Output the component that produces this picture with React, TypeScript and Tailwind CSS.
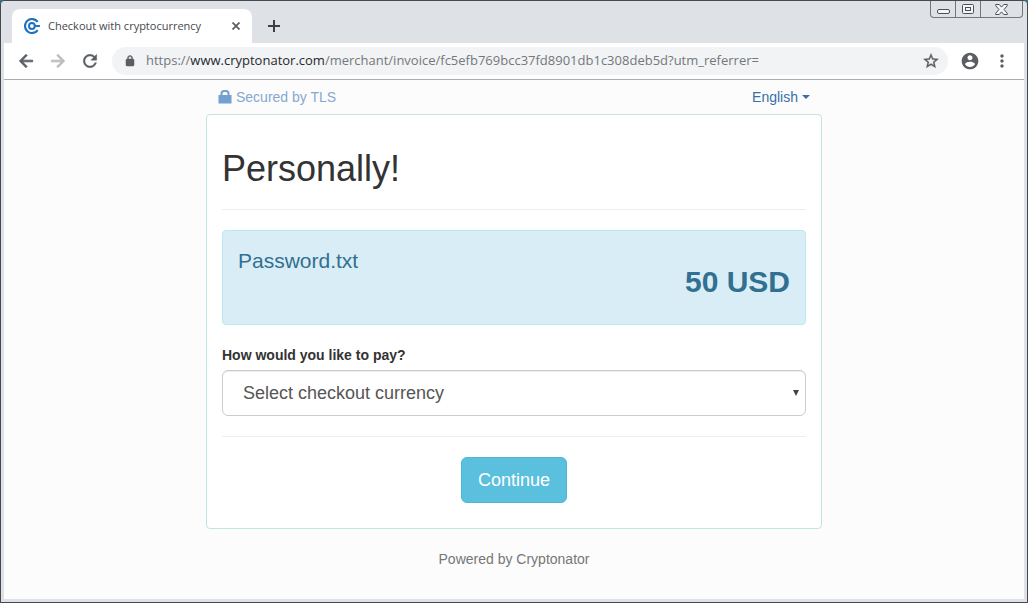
import { useState } from "react";

function CryptonatorLogo() {
  return (
    <svg viewBox="0 0 16 16" className="size-4 shrink-0" fill="none" stroke="#1f73bd" aria-hidden="true">
      <path d="M13.700 3.900A7 7 0 1 0 13.700 12.100" strokeWidth="2.200" />
      <circle cx="7.900" cy="8" r="2.900" strokeWidth="2" />
      <path d="M10.500 8H16" strokeWidth="1.900" />
    </svg>
  );
}

function MaterialIcon({ d, className }: { d: string; className: string }) {
  return (
    <svg viewBox="0 0 24 24" className={className} fill="currentColor" aria-hidden="true">
      <path d={d} />
    </svg>
  );
}

const paths = {
  back: "M20 11H7.83l5.59-5.59L12 4l-8 8 8 8 1.41-1.41L7.83 13H20v-2z",
  forward: "M12 4l-1.41 1.41L16.17 11H4v2h12.17l-5.58 5.59L12 20l8-8z",
  reload:
    "M17.65 6.35C16.2 4.9 14.21 4 12 4c-4.42 0-7.99 3.58-7.99 8s3.57 8 7.99 8c3.73 0 6.84-2.55 7.73-6h-2.08c-.82 2.33-3.04 4-5.65 4-3.31 0-6-2.69-6-6s2.69-6 6-6c1.66 0 3.14.69 4.22 1.78L13 11h7V4l-2.35 2.35z",
  lock: "M18 8h-1V6c0-2.76-2.24-5-5-5S7 3.24 7 6v2H6c-1.1 0-2 .9-2 2v10c0 1.1.9 2 2 2h12c1.1 0 2-.9 2-2V10c0-1.1-.9-2-2-2zM9 6c0-1.66 1.34-3 3-3s3 1.34 3 3v2H9z",
  star: "M22 9.24l-7.19-.62L12 2 9.19 8.63 2 9.24l5.46 4.73L5.82 21 12 17.27 18.18 21l-1.63-7.03L22 9.24zM12 15.4l-3.76 2.27 1-4.28-3.32-2.88 4.38-.38L12 6.1l1.71 4.04 4.38.38-3.32 2.88 1 4.28L12 15.4z",
  account:
    "M12 2C6.48 2 2 6.48 2 12s4.48 10 10 10 10-4.48 10-10S17.52 2 12 2zm0 3c1.66 0 3 1.34 3 3s-1.34 3-3 3-3-1.34-3-3 1.34-3 3-3zm0 14.2c-2.5 0-4.71-1.28-6-3.22.03-1.99 4-3.08 6-3.08 1.99 0 5.97 1.09 6 3.08-1.29 1.94-3.5 3.22-6 3.22z",
  menu: "M12 8c1.1 0 2-.9 2-2s-.9-2-2-2-2 .9-2 2 .9 2 2 2zm0 2c-1.1 0-2 .9-2 2s.9 2 2 2 2-.9 2-2-.9-2-2-2zm0 6c-1.1 0-2 .9-2 2s.9 2 2 2 2-.9 2-2-.9-2-2-2z",
};

function WindowControls() {
  return (
    <div className="flex h-[17px] overflow-hidden rounded-b-[4px] border border-t-0 border-[#73777c] text-[#4d5156]">
      <button aria-label="Minimize" className="flex w-[25px] items-center justify-center border-r border-[#73777c]">
        <svg viewBox="0 0 13 12" className="h-3 w-[13px]" fill="#f4f5f6" stroke="currentColor">
          <rect x="0.5" y="6.5" width="12" height="4" rx="1.5" />
        </svg>
      </button>
      <button aria-label="Maximize" className="flex w-[25px] items-center justify-center border-r border-[#73777c]">
        <svg viewBox="0 0 12 10" className="h-[10px] w-3" fill="#f4f5f6" stroke="currentColor">
          <rect x="0.5" y="0.5" width="11" height="9" rx="1" />
          <rect x="3.5" y="3.5" width="5" height="3" />
        </svg>
      </button>
      <button aria-label="Close window" className="flex w-[41px] items-center justify-center">
        <svg viewBox="0 0 13 11" className="h-[11px] w-[13px]" fill="#f4f5f6" stroke="currentColor" strokeLinejoin="round">
          <path d="M.7.5h3.5l2.3 2.6L8.8.5h3.5v1.2L9 5.5l3.3 3.8v1.2H8.8L6.5 7.9l-2.3 2.6H.7V9.3L4 5.5.7 1.7z" />
        </svg>
      </button>
    </div>
  );
}

function TabStrip() {
  return (
    <div className="flex h-[42px] items-end bg-[#dee1e6] pl-2">
      <div className="flex h-[34px] w-60 items-center rounded-t-lg bg-white pr-2 pl-3">
        <CryptonatorLogo />
        <span className="ml-2 flex-1 truncate text-[11px] text-[#45494d]">Checkout with cryptocurrency</span>
        <button aria-label="Close tab" className="flex size-4 items-center justify-center text-[#5a5e63]">
          <svg viewBox="0 0 8 8" className="size-2" stroke="currentColor" strokeWidth="1.7">
            <path d="M.5.5l7 7M7.500.5l-7 7" />
          </svg>
        </button>
      </div>
      <button aria-label="New tab" className="ml-3 flex h-[34px] w-5 items-center justify-center text-[#3c4043]">
        <svg viewBox="0 0 12 12" className="size-3" stroke="currentColor" strokeWidth="2">
          <path d="M6 0v12M0 6h12" />
        </svg>
      </button>
      <div className="ml-auto self-start pr-px">
        <WindowControls />
      </div>
    </div>
  );
}

function Toolbar() {
  return (
    <div className="flex h-[37px] items-center border-b border-[#a9abae] bg-white pr-3 pl-3 text-[#5a5e63]">
      <button aria-label="Back">
        <MaterialIcon d={paths.back} className="size-5 stroke-current" />
      </button>
      <button aria-label="Forward" className="ml-3 text-[#babcbe]">
        <MaterialIcon d={paths.forward} className="size-5 stroke-current" />
      </button>
      <button aria-label="Reload" className="ml-3">
        <MaterialIcon d={paths.reload} className="size-5 stroke-current stroke-[0.5]" />
      </button>
      <div className="ml-3 flex h-7 min-w-0 flex-1 items-center rounded-full bg-[#f1f3f4] pr-2 pl-3">
        <MaterialIcon d={paths.lock} className="size-3 shrink-0 stroke-current" />
        <div className="ml-[10px] min-w-0 flex-1 truncate text-[13px] text-[#74787c]">
          https://<span className="text-[#27292c]">www.cryptonator.com</span>
          /merchant/invoice/fc5efb769bcc37fd8901db1c308deb5d?utm_referrer=
        </div>
        <button aria-label="Bookmark this page">
          <MaterialIcon d={paths.star} className="size-[18px] stroke-current stroke-[0.5]" />
        </button>
      </div>
      <button aria-label="Profile" className="ml-3">
        <MaterialIcon d={paths.account} className="size-5" />
      </button>
      <button aria-label="Menu" className="ml-3">
        <MaterialIcon d={paths.menu} className="size-5" />
      </button>
    </div>
  );
}

function Checkout() {
  const [currency, setCurrency] = useState("");
  return (
    <main className="flex-1 bg-[#fcfcfc] px-4 font-['Liberation_Sans',Arial,sans-serif] text-[14px] leading-5 text-[#333]">
      <div className="mx-auto max-w-[616px]">
        <div className="flex h-[34px] items-center justify-between px-3">
          <span className="flex items-center gap-1 text-[#86a8cf]">
            <svg viewBox="0 0 14 14" className="size-[14px]" aria-hidden="true">
              <path
                fill="#75a0cd"
                fillRule="evenodd"
                d="M.5 5h2V3.500a3.500 3.500 0 0 1 3.500-3.500h2a3.500 3.500 0 0 1 3.500 3.500V5h2v8.500H.5zM4.500 5h5V3.500A1.500 1.500 0 0 0 8 2H6a1.500 1.500 0 0 0-1.500 1.500z"
              />
            </svg>
            Secured by TLS
          </span>
          <button className="flex items-center gap-1 text-[#3a6ea8]">
            English
            <svg viewBox="0 0 8 4" className="h-1 w-2" fill="currentColor" aria-hidden="true">
              <path d="M0 0h8L4 4z" />
            </svg>
          </button>
        </div>

        <form
          className="rounded-[4px] border border-[#c0e5e2] bg-white px-[15px] pt-[34px] pb-[25px]"
          onSubmit={(e) => e.preventDefault()}
        >
          <h1 className="text-[36px] leading-10">Personally!</h1>
          <hr className="my-5 border-[#eee]" />
          <div className="flex h-[95px] justify-between rounded-[4px] border border-[#bce8f1] bg-[#d9edf7] px-[15px] text-[#31708f]">
            <span className="pt-4 text-[21px] leading-7">Password.txt</span>
            <strong className="self-center pt-2 text-[30px] leading-8">50 USD</strong>
          </div>
          <label htmlFor="currency" className="mt-5 mb-[5px] block font-bold">
            How would you like to pay?
          </label>
          <div className="grid items-center">
            <select
              id="currency"
              value={currency}
              onChange={(e) => setCurrency(e.target.value)}
              className="col-start-1 row-start-1 h-[46px] w-full appearance-none rounded-[6px] border border-[#ccc] bg-white pr-8 pl-5 text-[18px] text-[#555] shadow-[inset_0_1px_1px_rgba(0,0,0,0.075)]"
            >
              <option value="">Select checkout currency</option>
            </select>
            <svg
              viewBox="0 0 6 6"
              className="pointer-events-none col-start-1 row-start-1 mr-[7px] size-[6px] justify-self-end"
              fill="#444"
              aria-hidden="true"
            >
              <path d="M0 0h6L3 6z" />
            </svg>
          </div>
          <hr className="my-5 border-[#eee]" />
          <button
            type="submit"
            className="mx-auto block h-[46px] rounded-[6px] border border-[#46b8da] bg-[#5bc0de] px-4 text-[18px] text-white"
          >
            Continue
          </button>
        </form>
        <p className="mt-5 pb-5 text-center text-[#777]">Powered by Cryptonator</p>
      </div>
    </main>
  );
}

export default function App() {
  return (
    <div className="min-h-screen bg-[#1c7f9c]">
      <div className="flex min-h-screen flex-col rounded-t-[4px] border border-[#45484c] bg-[#dee1e6] px-[3px] pb-[3px] font-['Open_Sans','Noto_Sans',sans-serif]">
        <TabStrip />
        <Toolbar />
        <Checkout />
      </div>
    </div>
  );
}
